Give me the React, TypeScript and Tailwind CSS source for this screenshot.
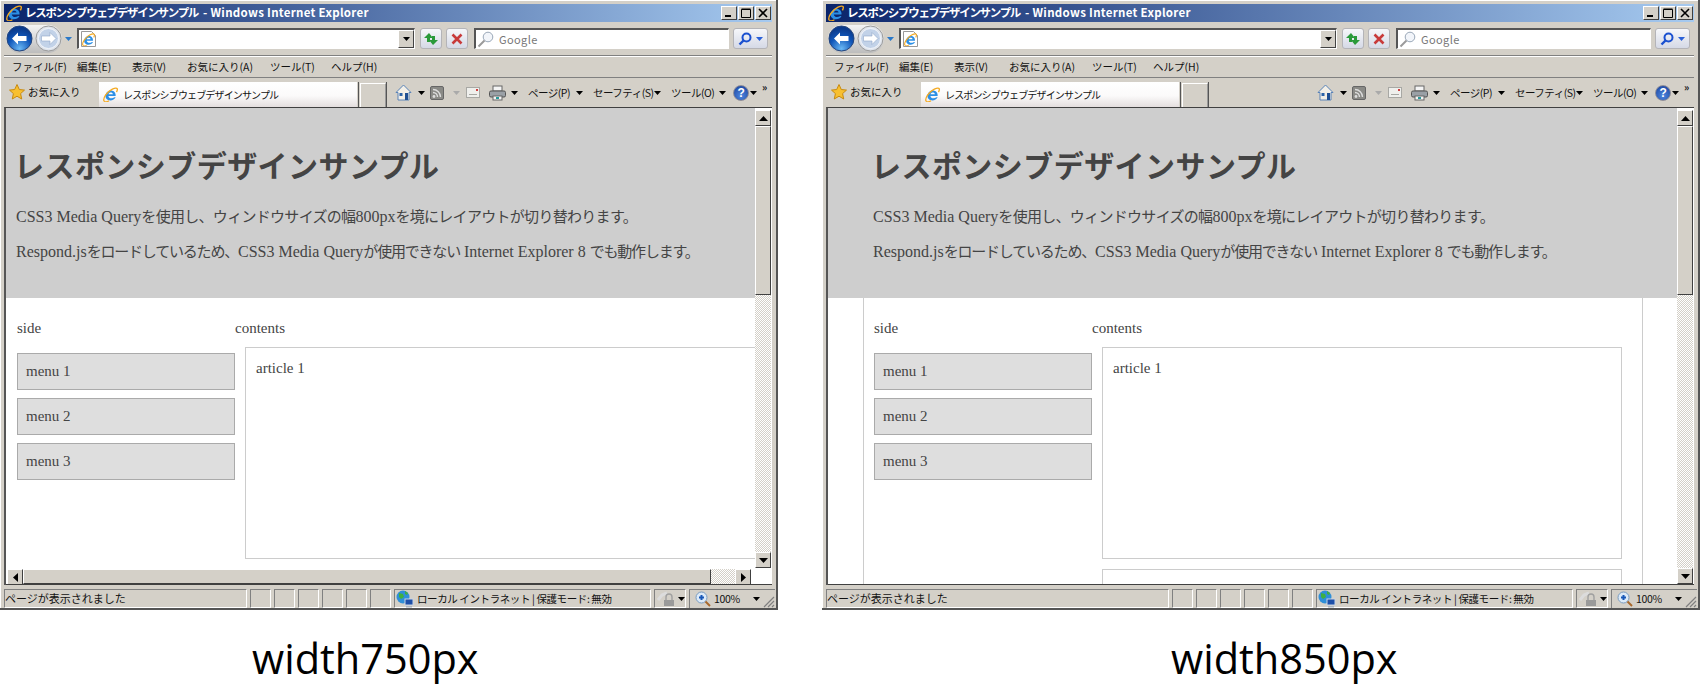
import React from "react";

const chrome = "font-['Noto_Sans_CJK_JP','Noto_Sans',sans-serif]";
const TITLE = "レスポンシブウェブデザインサンプル";

function IeLogo({ size = 16 }: { size?: number }) {
  return (
    <svg width={size} height={size} viewBox="0 0 16 16" className="shrink-0">
      <path d="M13.500 9.500H5.800c.2 2.500 3.500 3.500 6.500 1.500h1.200c-1.500 3.500-7 4.500-9.500 1.800C1.500 10.500 2.600 5.800 6 4.200c3.800-1.700 8 .8 7.500 5.300zM5.900 7.600h4.700c-.3-2.400-4.300-2.400-4.700 0z" fill="#2b8fe6" />
      <path d="M1.200 15.200C-.5 12.500 4 5 10 2.200c3-1.400 5.500-1.600 5.300.6-.1 1-.4 1.700-.9 2.600" fill="none" stroke="#f4aa22" strokeWidth="1.400" />
      <path d="M1.200 15c1.100 1.200 3.500.8 5.200-.3" fill="none" stroke="#f4aa22" strokeWidth="1.100" />
    </svg>
  );
}

function NavButtons() {
  return (
    <div className="flex items-center h-[28px] w-[56px] ml-[2px] rounded-full bg-[linear-gradient(#f4f4f4,#bdbdbd)]">
      <svg width="27" height="27" viewBox="0 0 27 27" className="shrink-0">
        <defs>
          <radialGradient id="backFill" cx="50%" cy="90%" r="80%">
            <stop offset="0" stopColor="#6ab8f4" />
            <stop offset="0.6" stopColor="#0f55b8" />
            <stop offset="1" stopColor="#0a3a8c" />
          </radialGradient>
        </defs>
        <circle cx="13.500" cy="13.500" r="12.500" fill="url(#backFill)" stroke="#25457c" />
        <path d="M6 13.500l6-6v3.500h8.500v5H12v3.500z" fill="#fff" />
      </svg>
      <svg width="27" height="27" viewBox="0 0 27 27" className="ml-[2px] shrink-0">
        <circle cx="13.500" cy="13.500" r="12.500" fill="#dfe4ec" stroke="#9a9a9a" />
        <circle cx="13.500" cy="13.500" r="10" fill="#c2d2e8" stroke="#f2f5fa" />
        <path d="M21 13.500l-6-6v3.500H6.500v5H15v3.500z" fill="#fff" stroke="#8ea6c8" strokeWidth=".6" />
      </svg>
    </div>
  );
}

function Caret({ className = "", color = "#000" }: { className?: string; color?: string }) {
  return (
    <svg width="7" height="4" viewBox="0 0 7 4" className={`shrink-0 ${className}`}>
      <path d="M0 0h7L3.500 4z" fill={color} />
    </svg>
  );
}

function AddressBar() {
  return (
    <div className="flex-1 h-[21px] flex items-stretch bg-white border border-t-[2px] border-l-[2px] border-t-[#555] border-l-[#555] border-r-white border-b-white">
      <div className="flex-1 flex items-center pl-[2px]">
        <svg width="15" height="16" viewBox="0 0 15 16">
          <path d="M.5.500h10l4 4v11H.500z" fill="#fff" stroke="#999" />
        </svg>
        <div className="-ml-[14px]">
          <IeLogo size={13} />
        </div>
      </div>
      <div className="w-[16px] flex items-center justify-center bg-[#d4d0c8] border border-t-white border-l-white border-r-[#444] border-b-[#444]">
        <Caret />
      </div>
    </div>
  );
}

function SquareButton({ children, className = "" }: { children: React.ReactNode; className?: string }) {
  return (
    <div className={`h-[21px] flex items-center justify-center rounded-[3px] border border-[#b4b4b8] bg-[linear-gradient(#f6f7fa,#d5d9e6)] ${className}`}>
      {children}
    </div>
  );
}

function SearchBox() {
  return (
    <div className="flex-none w-[255px] h-[21px] flex items-center bg-white border border-t-[2px] border-l-[2px] border-t-[#555] border-l-[#555] border-r-white border-b-white">
      <svg width="18" height="17" viewBox="0 0 18 17" className="ml-[1px]">
        <circle cx="11" cy="6" r="4.800" fill="#f2f5fa" stroke="#9aa8b8" />
        <path d="M7.500 9.500L1.500 15.500" stroke="#9a9a9a" strokeWidth="2" />
      </svg>
      <span className={`${chrome} ml-[4px] text-[11px] tracking-[.4px] text-[#777]`}>Google</span>
    </div>
  );
}

function MenuRow() {
  const items: [string, string][] = [
    ["ファイル(F)", "w-[65px]"],
    ["編集(E)", "w-[55px]"],
    ["表示(V)", "w-[55px]"],
    ["お気に入り(A)", "w-[83px]"],
    ["ツール(T)", "w-[61px]"],
    ["ヘルプ(H)", "w-[60px]"],
  ];
  return (
    <div className={`${chrome} h-[22px] shrink-0 flex items-center pl-[8px] text-[10.500px] text-[#111] border-t border-t-white border-b border-b-[#808080]`}>
      {items.map(([label, w]) => (
        <span key={label} className={`${w} shrink-0 whitespace-nowrap`}>{label}</span>
      ))}
    </div>
  );
}

function HomeIcon() {
  return (
    <svg width="17" height="17" viewBox="0 0 17 17" className="shrink-0">
      <path d="M8.500 1L1 8.500h2V16h11V8.500h2z" fill="#f2efe8" stroke="#5a83b8" />
      <rect x="4.500" y="9" width="3" height="3" fill="#2a62a8" />
      <rect x="10" y="9" width="3" height="7" fill="#1f4f92" />
    </svg>
  );
}

function RssIcon() {
  return (
    <svg width="14" height="14" viewBox="0 0 14 14" className="shrink-0">
      <rect x=".5" y=".5" width="13" height="13" rx="1.500" fill="#8a8a86" stroke="#666" />
      <circle cx="4" cy="10.500" r="1.400" fill="#ddd" />
      <path d="M3 6.500a4.500 4.500 0 0 1 4.500 4.500M3 3.500a7.500 7.500 0 0 1 7.500 7.500" fill="none" stroke="#ddd" strokeWidth="1.400" />
    </svg>
  );
}

function MailIcon() {
  return (
    <svg width="14" height="11" viewBox="0 0 14 11" className="shrink-0">
      <rect x=".5" y=".5" width="13" height="10" fill="#efefec" stroke="#a8a8a4" />
      <path d="M3 7.500h8" stroke="#a8a8a4" />
      <rect x="10" y="2" width="2" height="2" fill="#d04040" />
    </svg>
  );
}

function PrinterIcon() {
  return (
    <svg width="17" height="16" viewBox="0 0 17 16" className="shrink-0">
      <rect x="4" y="1" width="9" height="5" fill="#f4f4f4" stroke="#666" />
      <rect x=".5" y="6" width="16" height="6" rx="1.500" fill="#9aa0a6" stroke="#555" />
      <rect x="4" y="11" width="9" height="4" fill="#f4f4f4" stroke="#666" />
      <rect x="7" y="12" width="3" height="2" fill="#2a9a9a" />
    </svg>
  );
}

function HelpIcon() {
  return (
    <span className="h-[16px] w-[16px] shrink-0 rounded-full bg-[radial-gradient(circle_at_50%_70%,#4d86de,#173f9a)] border border-[#8c8c98] text-white text-[12px] leading-[14px] font-bold text-center font-['Liberation_Sans',sans-serif]">
      ?
    </span>
  );
}

function TabRow() {
  return (
    <div className="h-[29px] shrink-0 flex items-end">
      <div className="flex items-center self-center pl-[5px] w-[95px] shrink-0 mb-[1px]">
        <svg width="16" height="16" viewBox="0 0 16 16">
          <path d="M8 .5l2.300 5 5.200.6-3.900 3.500 1.100 5.400L8 12.200 3.300 15l1.100-5.400L.5 6.100l5.200-.6z" fill="#f8c030" stroke="#c88a10" />
        </svg>
        <span className={`${chrome} ml-[3px] text-[10.500px] text-[#111] whitespace-nowrap`}>お気に入り</span>
      </div>
      <div className="w-[258px] h-[25px] shrink-0 flex items-center pl-[4px] bg-[linear-gradient(#fff,#fbfafa_55%,#e4dede)]">
        <IeLogo size={15} />
        <span className={`${chrome} ml-[5px] text-[10px] tracking-[-.85px] text-[#111] whitespace-nowrap`}>{TITLE}</span>
      </div>
      <div className="ml-[1px] w-[1px] h-[25px] bg-[#555] shrink-0" />
      <div className="ml-[1px] w-[26px] h-[24px] shrink-0 bg-[#d4d0c8] border border-b-0 border-t-white border-l-white border-r-[#999]" />
      <div className="w-[1px] h-[25px] bg-[#555] shrink-0" />
      <div className={`${chrome} ml-auto mr-[2px] h-full flex items-center text-[10.500px] text-[#111] tracking-[-.5px] whitespace-nowrap`}>
        <HomeIcon />
        <Caret className="ml-[6px]" />
        <div className="ml-[5px]"><RssIcon /></div>
        <Caret className="ml-[9px]" color="#aaa" />
        <div className="ml-[6px]"><MailIcon /></div>
        <div className="ml-[9px]"><PrinterIcon /></div>
        <Caret className="ml-[5px]" />
        <span className="ml-[10px] w-[45px]">ページ(P)</span>
        <Caret className="ml-[3px]" />
        <span className="ml-[10px] w-[57px]">セーフティ(S)</span>
        <Caret className="ml-[4px]" />
        <span className="ml-[10px] w-[45px]">ツール(O)</span>
        <Caret className="ml-[3px]" />
        <div className="ml-[7px] flex"><HelpIcon /></div>
        <Caret className="ml-[1px]" />
        <span className="ml-[5px] w-[8px] mb-[11px] text-[10px] font-bold leading-none">»</span>
      </div>
    </div>
  );
}

function ScrollButton({ dir }: { dir: "up" | "down" | "left" | "right" }) {
  const d = { up: "M0 5L4.500 0 9 5z", down: "M0 0h9L4.500 5z", left: "M5 0v9L0 4.500z", right: "M0 0v9l5-4.500z" }[dir];
  const horizontal = dir === "left" || dir === "right";
  return (
    <div className="w-[16px] h-[16px] shrink-0 flex items-center justify-center bg-[#d4d0c8] border border-t-white border-l-white border-r-[#404040] border-b-[#404040]">
      <svg width={horizontal ? 5 : 9} height={horizontal ? 9 : 5} viewBox={horizontal ? "0 0 5 9" : "0 0 9 5"}>
        <path d={d} fill="#000" />
      </svg>
    </div>
  );
}

const track = "flex-1 bg-[repeating-conic-gradient(#d4d0c8_0_25%,#fff_0_50%)] bg-[length:2px_2px]";

function VScrollbar() {
  return (
    <div className="w-[17px] shrink-0 flex flex-col pt-[2px] pr-[1px] bg-white">
      <ScrollButton dir="up" />
      <div className="w-[16px] h-[169px] shrink-0 bg-[#d4d0c8] border border-t-white border-l-white border-r-[#404040] border-b-[#404040]" />
      <div className={track} />
      <ScrollButton dir="down" />
    </div>
  );
}

function HScrollbar() {
  return (
    <div className="h-[16px] shrink-0 flex items-stretch pl-[1px] mr-[21px] border-t border-t-white">
      <ScrollButton dir="left" />
      <div className="w-[688px] shrink-0 bg-[#d4d0c8] border border-t-white border-l-white border-r-[#404040] border-b-[#404040]" />
      <div className={track} />
      <ScrollButton dir="right" />
    </div>
  );
}

function GlobeIcon() {
  return (
    <svg width="18" height="18" viewBox="0 0 18 18" className="shrink-0">
      <circle cx="7" cy="7" r="6.500" fill="#2f8fd8" />
      <path d="M3 3l4 1 1 3-3 2-2-2zM9 1l3 2-1 2-2-1z" fill="#3fb040" />
      <rect x="9" y="9" width="8" height="6" fill="#1d4fa8" stroke="#c8d4e4" />
      <rect x="10" y="16" width="6" height="1.500" fill="#aab4c0" />
    </svg>
  );
}

function LockIcon() {
  return (
    <svg width="20" height="16" viewBox="0 0 20 16" className="shrink-0">
      <path d="M1 9l4-5 5-2" fill="none" stroke="#dcdcdc" strokeWidth="3" />
      <path d="M9 9V6a3 3 0 0 1 6 0v3" fill="none" stroke="#a0a0a0" strokeWidth="1.400" />
      <rect x="7" y="9" width="10" height="6" fill="#9a9a9a" />
    </svg>
  );
}

function ZoomIcon() {
  return (
    <svg width="16" height="16" viewBox="0 0 16 16" className="shrink-0">
      <circle cx="6.500" cy="6.500" r="5.500" fill="#dceaf8" stroke="#7a9cc0" />
      <path d="M4 6.500h5M6.500 4v5" stroke="#1858b8" strokeWidth="2" />
      <path d="M10.500 10.500l4.500 4.500" stroke="#a8682c" strokeWidth="2" />
    </svg>
  );
}

const cell = "h-full flex items-center border border-t-[#808080] border-l-[#808080] border-r-white border-b-white";

function StatusBar() {
  return (
    <div className={`${chrome} h-[19px] shrink-0 flex items-stretch gap-[3px] -mr-[3px] mt-[4px] text-[11px] text-[#111] whitespace-nowrap`}>
      <div className={`${cell} flex-1`}>ページが表示されました</div>
      {[0, 1, 2, 3, 4, 5].map((n) => (
        <div key={n} className={`${cell} w-[21px] shrink-0`} />
      ))}
      <div className={`${cell} w-[257px] shrink-0 pl-[1px] text-[10.500px]`}>
        <GlobeIcon />
        <span className="ml-[3px] tracking-[-.4px]">ローカル イントラネット | 保護モード: 無効</span>
      </div>
      <div className={`${cell} w-[32px] shrink-0 pl-[2px]`}>
        <LockIcon />
        <Caret className="ml-[1px]" />
      </div>
      <div className={`${cell} w-[86px] shrink-0 pl-[5px] border-r-0 border-b-0 text-[10.500px]`}>
        <ZoomIcon />
        <span className="ml-[3px] tracking-[-.3px]">100%</span>
        <Caret className="ml-[13px]" />
        <svg width="14" height="14" viewBox="0 0 14 14" className="ml-auto self-end">
          <path d="M13 3L3 13M13 7l-6 6M13 11l-2 2" stroke="#808080" strokeWidth="1.200" />
        </svg>
      </div>
    </div>
  );
}

function Ja({ children, tight = false }: { children: React.ReactNode; tight?: boolean }) {
  return <span className={`text-[15px] ${tight ? "tracking-[-1.2px]" : "tracking-[-.7px]"}`}>{children}</span>;
}

function SamplePage({ wide }: { wide: boolean }) {
  const articles = wide ? ["article 1", "article 2"] : ["article 1"];
  return (
    <div className="flex-1 min-w-0 overflow-hidden flex flex-col font-['Liberation_Serif','Noto_Sans_CJK_JP',serif] text-[#444] text-[15px]">
      <header className={`h-[190px] shrink-0 bg-[#cecece] pt-[34px] ${wide ? "pl-[45px]" : "pl-[10px]"}`}>
        <h1 className="-ml-[2px] text-[30px] leading-[44px] tracking-[.45px] font-bold font-['Noto_Sans_CJK_JP',sans-serif] whitespace-nowrap">レスポンシブデザインサンプル</h1>
        <p className="mt-[20px] text-[16px] leading-[22px] whitespace-nowrap">
          CSS3 Media Query<Ja>を使用し、ウィンドウサイズの幅</Ja>800px<Ja>を境にレイアウトが切り替わります。</Ja>
        </p>
        <p className="mt-[13px] text-[16px] leading-[22px] whitespace-nowrap">
          Respond.js<Ja tight>をロードしているため、</Ja>CSS3 Media Query<Ja tight>が使用できない</Ja> Internet Explorer 8 <Ja tight>でも動作します。</Ja>
        </p>
      </header>
      <div className={`flex-1 min-h-0 ${wide ? "ml-[35px] w-[780px] border-x border-x-[#ccc] pl-[10px]" : "ml-[11px]"}`}>
        <div className="flex w-[750px] pt-[19px]">
          <div className="w-[218px] shrink-0">
            <div className="h-[22px] leading-[22px]">side</div>
            <div className="mt-[14px] flex flex-col gap-[8px]">
              {["menu 1", "menu 2", "menu 3"].map((m) => (
                <div key={m} className="h-[37px] flex items-center pl-[8px] bg-[#dedede] border border-[#aaa]">{m}</div>
              ))}
            </div>
          </div>
          <div className="shrink-0">
            <div className="h-[22px] leading-[22px]">contents</div>
            <div className="ml-[10px] mt-[8px] w-[520px] flex flex-col gap-[10px]">
              {articles.map((a) => (
                <div key={a} className="h-[212px] shrink-0 px-[10px] pt-[9px] leading-[22px] border border-[#ccc]">{a}</div>
              ))}
            </div>
          </div>
        </div>
      </div>
    </div>
  );
}

function BrowserWindow({ wide }: { wide: boolean }) {
  return (
    <div className={`${wide ? "w-[878px]" : "w-[778px]"} h-[610px] shrink-0 flex flex-col bg-[#d4d0c8] pt-[4px] px-[4px] border-b-[2px] border-b-[#555] border-r-[2px] border-r-[#555] shadow-[inset_1px_1px_0_#fff]`}>
      <div className="h-[18px] shrink-0 flex items-center pl-[2px] pr-[1px] bg-[linear-gradient(90deg,#0a246a,#a6caf0)]">
        <IeLogo size={16} />
        <span className={`${chrome} ml-[3px] text-[11.500px] font-bold text-white whitespace-nowrap`}>
          <span className="tracking-[-1.3px]">{TITLE}</span>
          <span className="ml-[5px] tracking-[.3px]">- Windows Internet Explorer</span>
        </span>
        <div className="ml-auto flex gap-[1px]">
          {["min", "max", "close"].map((b) => (
            <div key={b} className="w-[16px] h-[14px] flex items-center justify-center bg-[#d4d0c8] border border-t-white border-l-white border-r-[#404040] border-b-[#404040]">
              <svg width="10" height="10" viewBox="0 0 10 10">
                {b === "min" && <rect x="1" y="7" width="6" height="2" fill="#000" />}
                {b === "max" && <path d="M.5 1.500h9v8h-9zM.5 1h9" fill="none" stroke="#000" />}
                {b === "close" && <path d="M1 1l8 8M9 1l-8 8" stroke="#000" strokeWidth="1.600" />}
              </svg>
            </div>
          ))}
        </div>
      </div>

      <div className="h-[34px] shrink-0 flex items-center pr-[4px] border-b border-b-[#808080]">
        <NavButtons />
        <Caret className="ml-[3px] mr-[5px]" color="#2a78c8" />
        <AddressBar />
        <SquareButton className="ml-[5px] w-[22px]">
          <svg width="16" height="14" viewBox="0 0 16 14">
            <path d="M6 1L1 6h3v4h3V6h3zM10 13l5-5h-3V4H9v4H6z" fill="#2a9a3a" />
          </svg>
        </SquareButton>
        <SquareButton className="ml-[4px] w-[22px]">
          <svg width="12" height="12" viewBox="0 0 12 12">
            <path d="M1.500 1.500l9 9M10.500 1.500l-9 9" stroke="#c83a3a" strokeWidth="2.600" />
          </svg>
        </SquareButton>
        <div className="ml-[6px]"><SearchBox /></div>
        <SquareButton className="ml-[4px] w-[35px] gap-[4px]">
          <svg width="14" height="14" viewBox="0 0 14 14">
            <circle cx="8.500" cy="5.500" r="4" fill="none" stroke="#1a50d0" strokeWidth="2" />
            <path d="M5.500 8.500L1.500 12.500" stroke="#1a50d0" strokeWidth="2.400" />
          </svg>
          <Caret color="#2a60d8" />
        </SquareButton>
      </div>

      <MenuRow />
      <TabRow />

      <div className="flex-1 min-h-0 flex flex-col border-t-[1px] border-l-[2px] border-t-[#404040] border-l-[#555] bg-white">
        <div className="flex-1 min-h-0 flex">
          <SamplePage wide={wide} />
          <VScrollbar />
        </div>
        {!wide && <HScrollbar />}
        <div className="h-[1px] shrink-0 bg-[#404040]" />
      </div>
      <StatusBar />
    </div>
  );
}

export default function App() {
  return (
    <div className="w-[1700px] h-[700px] bg-white overflow-hidden">
      <div className="flex gap-[44px]">
        <BrowserWindow wide={false} />
        <BrowserWindow wide />
      </div>
      <div className="flex mt-[25px] text-[41.500px] leading-[46px] text-black font-['Open_Sans',sans-serif]">
        <span className="ml-[252px] w-[919px]">width750px</span>
        <span>width850px</span>
      </div>
    </div>
  );
}
